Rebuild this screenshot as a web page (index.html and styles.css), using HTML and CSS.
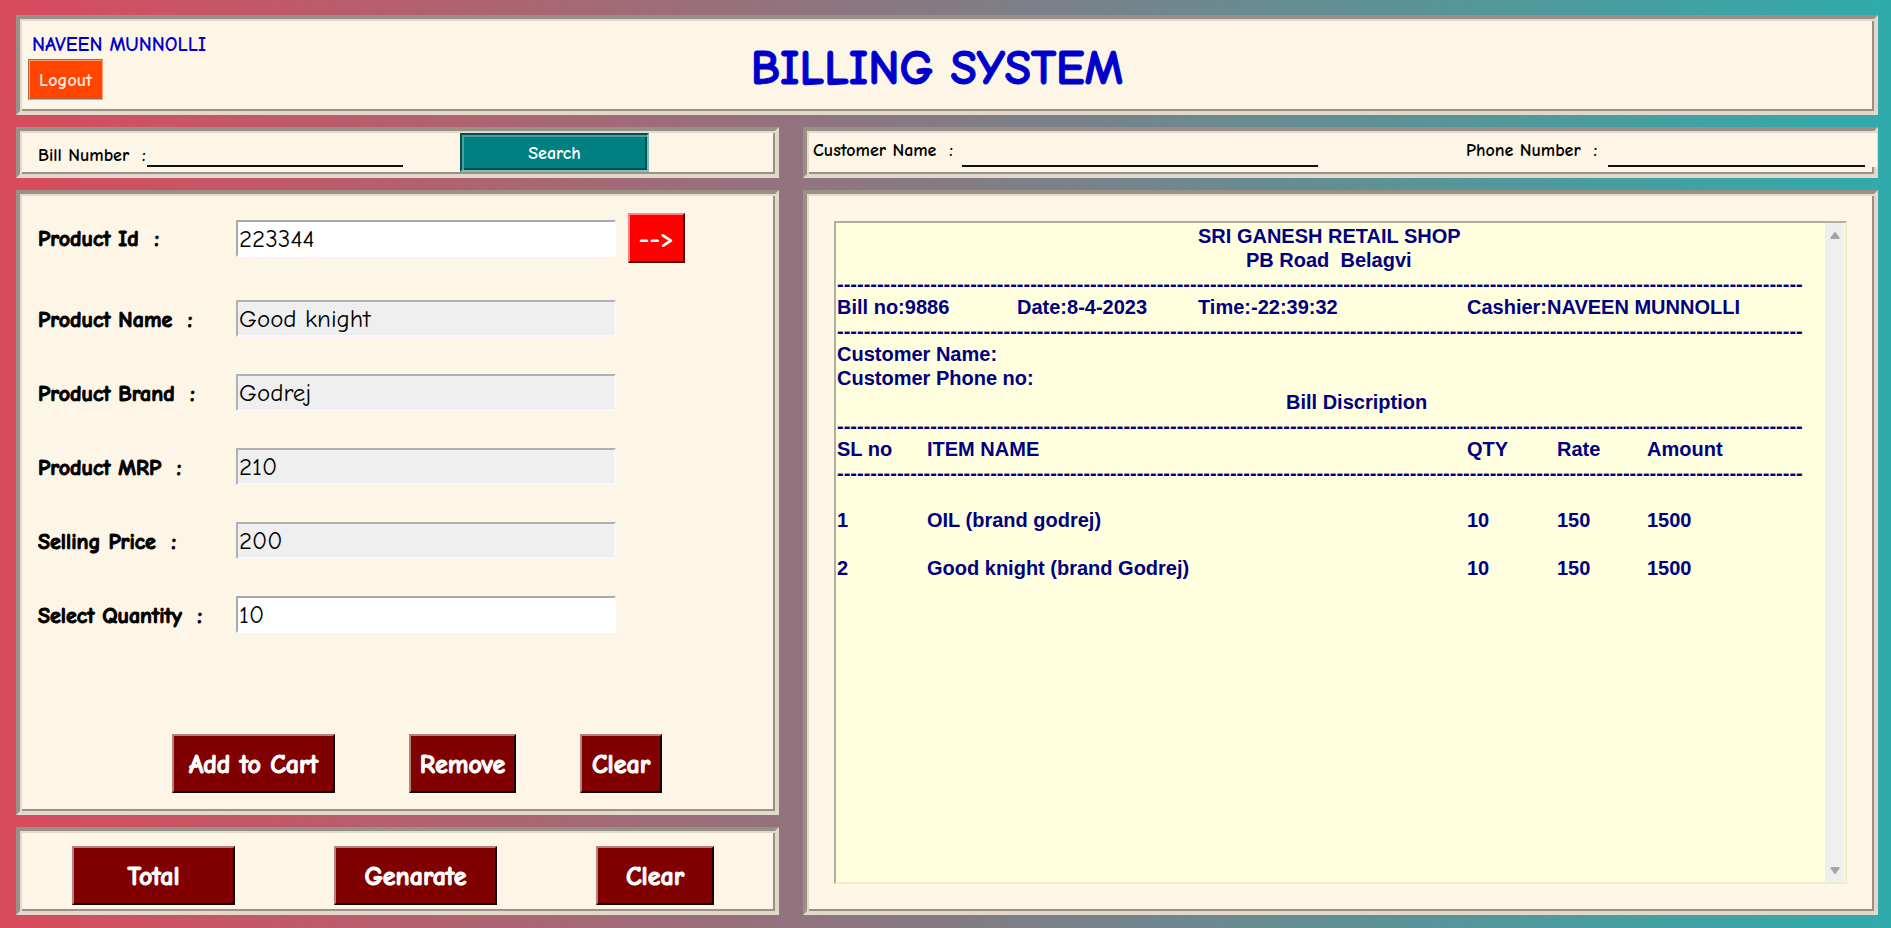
FILE: index.html
```html
<!DOCTYPE html>
<html lang="en">
<head>
<meta charset="utf-8">
<title>Billing System</title>
<link rel="stylesheet" href="styles.css">
</head>
<body>
<div class="page">
  <header class="panel header">
    <div class="user">
      <span class="user-name">NAVEEN MUNNOLLI</span>
      <button class="logout" type="button">Logout</button>
    </div>
    <h1 class="title">BILLING SYSTEM</h1>
  </header>

  <form class="panel search-bar">
    <label class="bar-label" for="bill-number">Bill Number&nbsp; :</label>
    <input class="line-input bill-number" id="bill-number" type="text">
    <button class="search" type="button">Search</button>
  </form>

  <form class="panel customer-bar">
    <label class="bar-label" for="customer-name">Customer Name&nbsp; :</label>
    <input class="line-input customer-name" id="customer-name" type="text">
    <label class="bar-label phone-label" for="phone">Phone Number&nbsp; :</label>
    <span class="phone-box"><input class="line-input phone" id="phone" type="text"></span>
  </form>

  <form class="panel product">
    <div class="field field-first">
      <label class="field-label" for="pid">Product Id&nbsp; :</label>
      <input class="field-input" id="pid" type="text" value="223344">
      <button class="fetch" type="button">--&gt;</button>
    </div>
    <div class="field">
      <label class="field-label" for="pname">Product Name&nbsp; :</label>
      <input class="field-input" id="pname" type="text" value="Good knight" disabled>
    </div>
    <div class="field">
      <label class="field-label" for="pbrand">Product Brand&nbsp; :</label>
      <input class="field-input" id="pbrand" type="text" value="Godrej" disabled>
    </div>
    <div class="field">
      <label class="field-label" for="pmrp">Product MRP&nbsp; :</label>
      <input class="field-input" id="pmrp" type="text" value="210" disabled>
    </div>
    <div class="field">
      <label class="field-label" for="price">Selling Price&nbsp; :</label>
      <input class="field-input" id="price" type="text" value="200" disabled>
    </div>
    <div class="field">
      <label class="field-label" for="qty">Select Quantity&nbsp; :</label>
      <input class="field-input" id="qty" type="text" value="10">
    </div>
    <div class="cart-actions">
      <button class="action wide" type="button">Add to Cart</button>
      <button class="action medium" type="button">Remove</button>
      <button class="action small" type="button">Clear</button>
    </div>
  </form>

  <div class="panel bill-actions">
    <button class="action wide" type="button">Total</button>
    <button class="action wide" type="button">Genarate</button>
    <button class="action clear-bill" type="button">Clear</button>
  </div>

  <main class="panel bill-panel">
    <div class="bill">
      <div class="bill-text">
        <p class="shop">SRI GANESH RETAIL SHOP</p>
        <p class="address">PB Road&nbsp; Belagvi</p>
        <p class="rule" aria-hidden="true">-------------------------------------------------------------------------------------------------------------------------------------------------</p>
        <div class="info">
          <span>Bill no:9886</span><span>Date:8-4-2023</span><span>Time:-22:39:32</span><span>Cashier:NAVEEN MUNNOLLI</span>
        </div>
        <p class="rule" aria-hidden="true">-------------------------------------------------------------------------------------------------------------------------------------------------</p>
        <p>Customer Name:</p>
        <p>Customer Phone no:</p>
        <p class="description">Bill Discription</p>
        <p class="rule" aria-hidden="true">-------------------------------------------------------------------------------------------------------------------------------------------------</p>
        <table class="items">
          <colgroup><col class="c-no"><col class="c-name"><col class="c-num"><col class="c-num"><col></colgroup>
          <thead>
            <tr><th>SL no</th><th>ITEM NAME</th><th>QTY</th><th>Rate</th><th>Amount</th></tr>
            <tr class="rule-row" aria-hidden="true"><td colspan="5">-------------------------------------------------------------------------------------------------------------------------------------------------</td></tr>
          </thead>
          <tbody>
            <tr><td>1</td><td>OIL (brand godrej)</td><td>10</td><td>150</td><td>1500</td></tr>
            <tr><td>2</td><td>Good knight (brand Godrej)</td><td>10</td><td>150</td><td>1500</td></tr>
          </tbody>
        </table>
      </div>
      <div class="scrollbar" aria-hidden="true">
        <svg class="arrow" viewBox="0 0 10 8"><path d="M5 0.5 9.5 6.5Q10 8 8.5 8H1.5Q0 8 .5 6.5Z"/></svg>
        <svg class="arrow" viewBox="0 0 10 8"><path d="M5 7.5 9.5 1.5Q10 0 8.5 0H1.5Q0 0 .5 1.5Z"/></svg>
      </div>
    </div>
  </main>
</div>
</body>
</html>
```

FILE: styles.css
```css
* { box-sizing: border-box; }

body {
  margin: 0;
  font-family: "Comic Sans MS", "Comic Neue", "Open Sans", sans-serif;
  color: #000;
}

button, input { font-family: inherit; margin: 0; }
button { cursor: pointer; }

.page {
  min-height: 100vh;
  display: grid;
  grid-template-columns: 763fr 1075fr;
  grid-template-rows: 100px 51px 1fr 88px;
  gap: 12px 24px;
  padding: 15px 13px 13px 16px;
  background: linear-gradient(to right, #d94b5d, #2fabab);
}

.panel {
  min-width: 0;
  background: #fdf5e6;
  border: 4px solid;
  border-color: #999187 #e2d9ca #e2d9ca #999187;
  box-shadow: inset 2px 2px #e4dbcc, inset -2px -2px #999187;
  padding: 2px;
}

.header {
  grid-column: 1 / -1;
  display: grid;
  grid-template-columns: 200px 1fr 220px;
  align-items: center;
}
.user {
  display: flex;
  flex-direction: column;
  align-items: flex-start;
  gap: 2px;
  padding-left: 6px;
}
.user-name {
  padding: 2px 0 0 4px;
  font-size: 20px;
  line-height: 24px;
  font-weight: 700;
  color: #0000cd;
  white-space: nowrap;
}
.logout {
  width: 75px;
  height: 41px;
  border: 2px groove #ff9a70;
  background: #ff4500;
  color: #fde6e0;
  font-size: 18px;
  font-weight: 700;
  padding: 2px 0 0;
}
.title {
  margin: 0;
  padding-top: 8px;
  text-align: center;
  font-size: 48px;
  line-height: 56px;
  font-weight: 700;
  color: #0000cd;
  -webkit-text-stroke: 1px;
}

.search-bar, .customer-bar { display: flex; align-items: stretch; }
.bar-label {
  font-size: 18px;
  line-height: 24px;
  font-weight: 700;
  white-space: nowrap;
}
.line-input {
  border: 0;
  border-bottom: 2px solid #111;
  background: transparent;
  font-size: 18px;
  min-width: 0;
  padding: 0 2px;
  outline: 0;
}
.search-bar .bar-label { width: 125px; padding: 11px 0 0 16px; }
.bill-number { width: 256px; height: 34px; }
.search {
  width: 189px;
  margin-left: 57px;
  border: 2px solid;
  border-color: #005050 #80bfbf #80bfbf #005050;
  box-shadow: inset 2px 2px #4d9f9f, inset -2px -2px #005050;
  background: #008080;
  color: #fff;
  font-size: 18px;
  font-weight: 700;
  padding: 2px 0 0;
}
.customer-bar .bar-label { width: 153px; padding: 6px 0 0 4px; }
.customer-bar .phone-label { width: 146px; margin-left: auto; }
.customer-name { width: 356px; height: 34px; }
.phone-box {
  height: 34px;
  margin-right: -5px;
  padding-right: 12px;
  background: #fdf5e6;
}
.phone { width: 257px; height: 34px; }

.product {
  display: flex;
  flex-direction: column;
  gap: 37px;
  padding: 19px 2px 18px 18px;
}
.field { display: flex; align-items: center; }
.field-first { height: 50px; }
.field + .field { height: 37px; }
.field-label {
  width: 198px;
  padding-top: 2px;
  font-size: 22px;
  line-height: 24px;
  font-weight: 700;
  white-space: nowrap;
  -webkit-text-stroke: 1px;
}
.field-input {
  width: 380px;
  height: 37px;
  border: 2px solid;
  border-color: #a9a9a9 #fff #fff #a9a9a9;
  background: #fff;
  color: #000;
  font-size: 25px;
  padding: 0 1px;
}
.field-input:disabled {
  background: #efefef;
  border-color: #b0b0b0 #f8f8f8 #f8f8f8 #b0b0b0;
}
.fetch {
  width: 57px;
  height: 50px;
  margin-left: 12px;
  border: 2px solid;
  border-color: #ff8080 #4d0000 #4d0000 #ff8080;
  background: #f00;
  color: #fff;
  font-size: 26px;
  font-weight: 700;
  padding: 2px 0 0;
}

.action {
  height: 59px;
  border: 2px solid;
  border-color: #b98080 #100000 #100000 #b98080;
  background: #800000;
  color: #fff;
  font-size: 26px;
  font-weight: 700;
  padding: 2px 0 0;
  white-space: nowrap;
  -webkit-text-stroke: 1px;
}
.wide { width: 163px; }
.medium { width: 107px; margin-left: 10px; }
.small { width: 82px; }
.clear-bill { width: 118px; }
.cart-actions {
  display: flex;
  margin-top: auto;
  padding-left: 134px;
  gap: 64px;
}
.bill-actions {
  display: flex;
  align-items: flex-end;
  gap: 99px;
  padding: 2px 2px 6px 52px;
}

.bill-panel { grid-column: 2; grid-row: 3 / 5; display: flex; padding: 27px; }
.bill {
  flex: 1;
  min-width: 0;
  display: flex;
  border: 2px solid;
  border-color: #b0ae9c #eeeecf #eeeecf #b0ae9c;
  background: #ffffe0;
}
.bill-text {
  flex: 1;
  min-width: 0;
  overflow: hidden;
  padding: 1px 0 0 1px;
  font-family: "Liberation Sans", Arial, sans-serif;
  font-size: 20px;
  line-height: 24px;
  font-weight: 700;
  color: #000080;
  white-space: nowrap;
}
.bill-text p { margin: 0; }
.bill-text .rule { padding-top: 2px; line-height: 21px; }
.bill-text .shop { padding-left: 361px; }
.bill-text .address { padding-left: 409px; }
.bill-text .description { padding-left: 449px; }
.info { display: grid; grid-template-columns: 180px 181px 269px 1fr; }
.items {
  width: 100%;
  table-layout: fixed;
  border-collapse: collapse;
}
.items th, .items td { padding: 0; text-align: left; font-weight: 700; }
.c-no { width: 90px; }
.c-name { width: 540px; }
.c-num { width: 90px; }
.items .rule-row td { padding-top: 2px; line-height: 21px; }
.items tbody td { padding-top: 24px; }

.scrollbar {
  width: 19px;
  margin: 0 1px;
  display: flex;
  flex-direction: column;
  justify-content: space-between;
  align-items: center;
  padding: 8px 0 7px;
  background: #efefef;
}
.arrow { width: 10px; height: 8px; fill: #a5a5a5; }
```
